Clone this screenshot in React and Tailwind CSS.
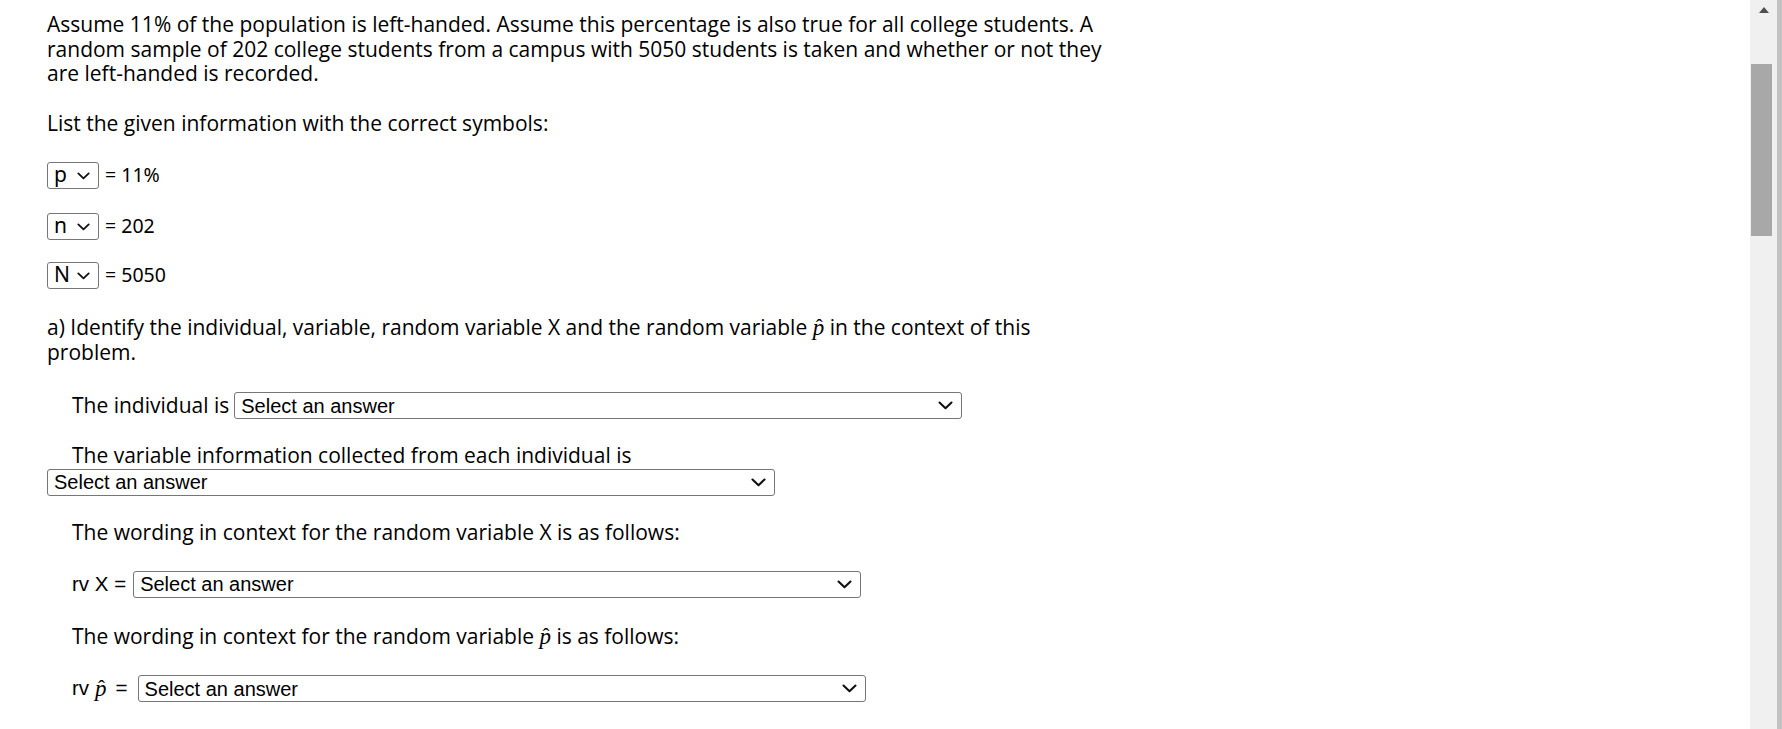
import React from 'react'

function Chevron({ w = 15, h = 9 }) {
    return (
        <svg width={w} height={h} viewBox="0 0 15 9" fill="none" className="shrink-0">
            <path d="M1.5 1.5 L7.5 7.2 L13.5 1.5" stroke="#111" strokeWidth="2.1" strokeLinecap="round" strokeLinejoin="round"/>
        </svg>
    )
}

// italic p with a hat, as the math renderer draws it
function PHat() {
    return (
        <span className="relative inline-block font-['Liberation_Serif',serif] italic text-[23px] leading-none">
            p
            <span className="absolute left-[3px] top-[1px] not-italic text-[21px]">ˆ</span>
        </span>
    )
}

function SymbolSelect({ value }) {
    return (
        <div className="flex h-[27px] w-[52px] items-center justify-between rounded-[3px] border border-[#767676] bg-white pl-[6px] pr-[8px] font-['Noto_Sans',sans-serif] text-[21px] leading-none text-black">
            <span className="-mt-[3px]">{value}</span>
            <Chevron w={13} h={8}/>
        </div>
    )
}

function AnswerSelect() {
    return (
        <div className="flex h-[27px] w-[728px] shrink-0 items-center justify-between rounded-[3px] border border-[#767676] bg-white pl-[6px] pr-[8px] font-['Liberation_Sans',Arial,sans-serif] text-[20px] leading-none text-black">
            <span>Select an answer</span>
            <Chevron/>
        </div>
    )
}

export default function App() {
    return (
        <div className="flex h-screen w-full overflow-hidden bg-white">
            <main className="flex-1 pl-[47px] pt-[12px] font-['Open_Sans',sans-serif] text-[21px] leading-[24.5px] text-black">
                <p className="whitespace-nowrap">
                    Assume 11% of the population is left-handed. Assume this percentage is also true for all college students. A<br/>
                    random sample of 202 college students from a campus with 5050 students is taken and whether or not they<br/>
                    are left-handed is recorded.
                </p>

                <p className="mt-[25.5px]">List the given information with the correct symbols:</p>

                {/* given values */}
                <div className="mt-[26.5px] flex items-center">
                    <SymbolSelect value="p"/>
                    <span className="ml-[6px] font-['Noto_Sans',sans-serif] text-[19.5px]">= 11%</span>
                </div>
                <div className="mt-[24px] flex items-center">
                    <SymbolSelect value="n"/>
                    <span className="ml-[6px] font-['Noto_Sans',sans-serif] text-[19.5px]">= 202</span>
                </div>
                <div className="mt-[22px] flex items-center">
                    <SymbolSelect value="N"/>
                    <span className="ml-[6px] font-['Noto_Sans',sans-serif] text-[19.5px]">= 5050</span>
                </div>

                <p className="mt-[26px] whitespace-nowrap">
                    a) Identify the individual, variable, random variable X and the random variable <PHat/> in the context of this<br/>
                    problem.
                </p>

                <div className="mt-[28px] flex items-center pl-[25px]">
                    <span className="mr-[5px] whitespace-nowrap">The individual is</span>
                    <AnswerSelect/>
                </div>

                <p className="mt-[24px] pl-[25px]">The variable information collected from each individual is</p>
                <div className="mt-[1px]">
                    <AnswerSelect/>
                </div>

                <p className="mt-[24px] pl-[25px]">The wording in context for the random variable X is as follows:</p>
                <div className="mt-[26.5px] flex items-center pl-[25px]">
                    <span className="mr-[7px] whitespace-nowrap font-['Liberation_Sans',Arial,sans-serif] text-[20.5px]">rv X =</span>
                    <AnswerSelect/>
                </div>

                <p className="mt-[26px] pl-[25px]">The wording in context for the random variable <PHat/> is as follows:</p>
                <div className="mt-[27px] flex items-center pl-[25px]">
                    <span className="mr-[6px] font-['Liberation_Sans',Arial,sans-serif] text-[20.5px]">rv</span>
                    <span className="mr-[9px]"><PHat/></span>
                    <span className="mr-[10px] font-['Liberation_Sans',Arial,sans-serif] text-[20.5px]">=</span>
                    <AnswerSelect/>
                </div>
            </main>

            {/* scrollbar */}
            <div className="flex h-full shrink-0">
                <div className="flex w-[27px] flex-col items-center bg-[#f0f0f0]">
                    <div className="mt-[7px] h-0 w-0 border-x-[5.5px] border-b-[6px] border-x-transparent border-b-[#505050]"/>
                    <div className="ml-[-4px] mt-[51px] h-[172px] w-[21px] bg-[#a8a8a8]"/>
                </div>
                <div className="w-[5px] bg-[#c2c2c2]"/>
            </div>
        </div>
    )
}
